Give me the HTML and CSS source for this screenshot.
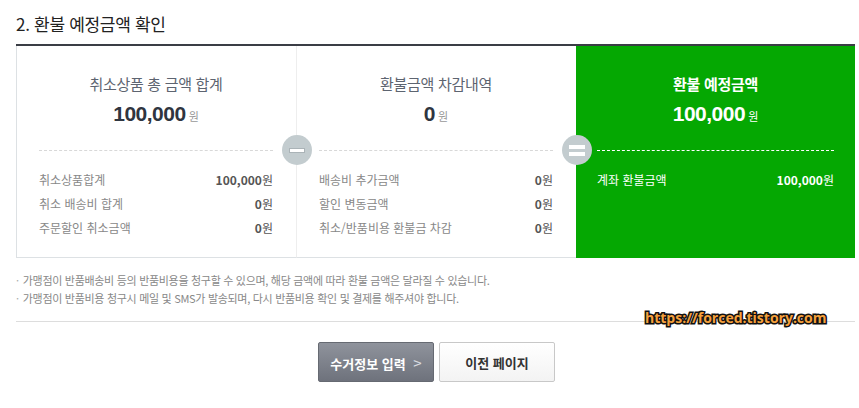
FILE: index.html
```html
<!DOCTYPE html>
<html lang="ko">
<head>
	<meta charset="UTF-8">
	<title>환불 예정금액 확인</title>
	<link rel="stylesheet" href="styles.css">
</head>
<body>
	<div id="wrapper">
		<h2 class="sec-title">2. 환불 예정금액 확인</h2>

		<div class="refund">
			<!-- 취소상품 총 금액 -->
			<div class="col">
				<div class="col-head">
					<p class="col-name">취소상품 총 금액 합계</p>
					<p class="col-sum"><strong>100,000</strong><span>원</span></p>
				</div>
				<ul class="col-list">
					<li><span>취소상품합계</span><em>100,000<i>원</i></em></li>
					<li><span>취소 배송비 합계</span><em>0<i>원</i></em></li>
					<li><span>주문할인 취소금액</span><em>0<i>원</i></em></li>
				</ul>
				<span class="sign minus"><b></b></span>
			</div>
			<!-- 차감내역 -->
			<div class="col">
				<div class="col-head">
					<p class="col-name">환불금액 차감내역</p>
					<p class="col-sum"><strong>0</strong><span>원</span></p>
				</div>
				<ul class="col-list">
					<li><span>배송비 추가금액</span><em>0<i>원</i></em></li>
					<li><span>할인 변동금액</span><em>0<i>원</i></em></li>
					<li><span>취소/반품비용 환불금 차감</span><em>0<i>원</i></em></li>
				</ul>
				<span class="sign equal"><b></b><b></b></span>
			</div>
			<!-- 환불 예정금액 -->
			<div class="col total">
				<div class="col-head">
					<p class="col-name">환불 예정금액</p>
					<p class="col-sum"><strong>100,000</strong><span>원</span></p>
				</div>
				<ul class="col-list">
					<li><span>계좌 환불금액</span><em>100,000<i>원</i></em></li>
				</ul>
			</div>
		</div>

		<ul class="notes">
			<li>가맹점이 반품배송비 등의 반품비용을 청구할 수 있으며, 해당 금액에 따라 환불 금액은 달라질 수 있습니다.</li>
			<li>가맹점이 반품비용 청구시 메일 및 SMS가 발송되며, 다시 반품비용 확인 및 결제를 해주셔야 합니다.</li>
		</ul>

		<div class="btns">
			<button class="btn btn-next">수거정보 입력 <span class="arr">&gt;</span></button>
			<button class="btn btn-prev">이전 페이지</button>
		</div>

		<span class="mark">https://forced.tistory.com</span>
	</div>
</body>
</html>
```

FILE: styles.css
```css
body {
	margin: 0;
	background-color: #fff;
	font-family: "Noto Sans CJK KR", "Noto Sans", sans-serif;
	color: #333;
}
p, ul, h2 {
	margin: 0;
	padding: 0;
}
ul {
	list-style: none;
}
#wrapper {
	position: relative;
	width: 839px;
	margin-left: 16px;
}
.sec-title {
	font-size: 17px;
	font-weight: normal;
	color: #222;
	line-height: 20px;
	padding-top: 14px;
	height: 30px;
	letter-spacing: -0.3px;
}
.refund {
	display: flex;
	border-top: 2px solid #3a3d45;
	height: 212px;
}
.col {
	position: relative;
	width: 280px;
	border-left: 1px solid #dde1e4;
	border-bottom: 1px solid #dde1e4;
	box-sizing: border-box;
	padding: 0 23px 0 22px;
}
.col + .col {
	border-left: 1px solid #eee;
}
.col.total {
	width: 279px;
	background-color: #05a802;
	border: 0;
	padding: 0 21px 0 21px;
}
.col-head {
	text-align: center;
	padding-top: 28px;
	height: 76px;
	border-bottom: 1px dashed #d8d8d8;
}
.total .col-head {
	border-bottom: 1px dashed #fff;
}
.col-name {
	font-size: 15px;
	color: #5d6470;
	line-height: 20px;
	letter-spacing: -0.3px;
}
.col-sum {
	margin-top: 8px;
	line-height: 24px;
}
.col-sum strong {
	font-size: 21px;
	font-weight: bold;
	color: #2f3540;
	font-family: "Liberation Sans", "Noto Sans CJK KR", sans-serif;
	letter-spacing: -0.5px;
}
.col-sum span {
	font-size: 11px;
	color: #999;
	margin-left: 3px;
}
.total .col-name,
.total .col-sum strong,
.total .col-sum span {
	color: #fff;
	font-weight: bold;
}
.total .col-sum span {
	font-weight: normal;
}
.col-list {
	padding-top: 17px;
}
.col-list li {
	display: flex;
	justify-content: space-between;
	font-size: 12px;
	line-height: 24px;
	color: #888;
}
.col-list em {
	font-style: normal;
	font-weight: bold;
	color: #555;
}
.col-list em i {
	font-style: normal;
	font-weight: normal;
	color: #555;
}
.total .col-list li,
.total .col-list em,
.total .col-list em i {
	color: #fff;
}
.sign {
	position: absolute;
	right: -16px;
	top: 89px;
	width: 30px;
	height: 30px;
	border-radius: 50%;
	background-color: #c3cccf;
	z-index: 2;
	display: flex;
	flex-direction: column;
	align-items: center;
	justify-content: center;
	gap: 3px;
}
.sign b {
	display: block;
	width: 14px;
	height: 3px;
	background-color: #fff;
	border: 1px solid #aab3b7;
}
.equal b {
	border: 0;
	height: 4px;
	width: 16px;
}
.notes {
	padding-top: 13px;
	height: 50px;
	border-bottom: 1px solid #ddd;
}
.notes li {
	font-size: 11px;
	color: #888;
	line-height: 18px;
	letter-spacing: -0.3px;
}
.notes li:before {
	content: "·";
	color: #aaa;
	margin-right: 4px;
}
.btns {
	display: flex;
	justify-content: center;
	gap: 5px;
	padding-top: 20px;
	padding-left: 2px;
}
.btn {
	width: 116px;
	height: 40px;
	font-family: "Noto Sans CJK KR", sans-serif;
	font-size: 13px;
	font-weight: bold;
	border-radius: 2px;
	cursor: pointer;
}
.btn-next {
	color: #fff;
	background: linear-gradient(#8f939c, #6e727c);
	border: 1px solid #666a72;
}
.btn-next .arr {
	font-weight: normal;
	font-size: 15px;
	color: #d8dbe0;
	margin-left: 4px;
}
.btn-prev {
	color: #333;
	background: linear-gradient(#fff, #f3f3f3);
	border: 1px solid #c8c8c8;
}
.mark {
	position: absolute;
	left: 629px;
	top: 308px;
	font-family: "Open Sans", sans-serif;
	font-size: 14px;
	font-weight: bold;
	color: #f5a03c;
	-webkit-text-stroke: 3px #111;
	paint-order: stroke fill;
}
```
